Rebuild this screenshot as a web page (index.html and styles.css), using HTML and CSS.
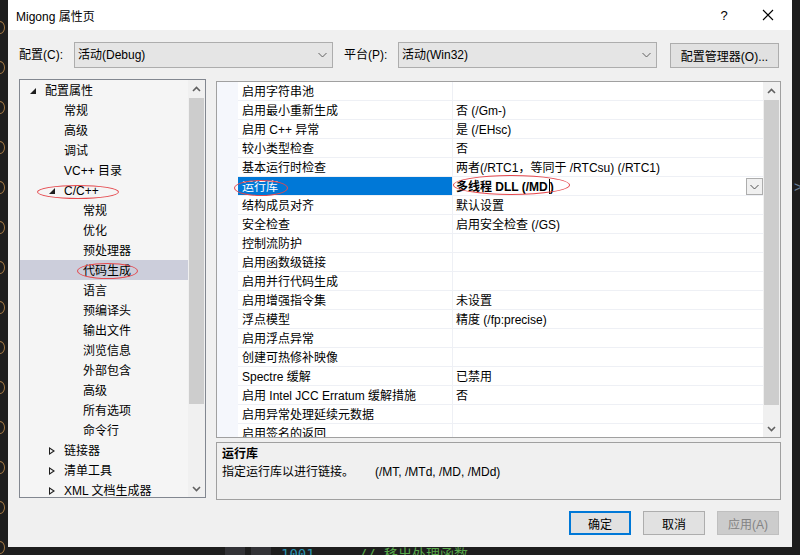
FILE: index.html
```html
<!DOCTYPE html>
<html lang="zh-CN">
<head>
  <meta charset="UTF-8">
  <title>Migong 属性页</title>
  <link rel="stylesheet" href="styles.css">
</head>
<body>
  <div class="desk">
    <div class="edge-left">
      <span class="fold"></span><span class="fold"></span><span class="fold"></span><span class="fold"></span>
      <span class="fold"></span><span class="fold"></span><span class="fold"></span><span class="fold"></span>
      <span class="fold"></span><span class="fold"></span><span class="fold"></span><span class="fold"></span>
      <span class="fold"></span><span class="fold"></span>
    </div>

    <div class="dialog">
      <div class="titlebar">
        <span class="title">Migong 属性页</span>
        <span class="cap-btn">?</span>
        <span class="cap-btn">
          <svg width="12" height="12" viewBox="0 0 12 12"><path d="M1 1 L11 11 M11 1 L1 11" stroke="#000" stroke-width="1.1" fill="none"/></svg>
        </span>
      </div>

      <div class="config-row">
        <span class="cfg-label">配置(C):</span>
        <div class="combo">
          <span>活动(Debug)</span>
          <svg width="9" height="6" viewBox="0 0 9 6"><path d="M0.5 1 L4.5 5 L8.5 1" stroke="#606060" stroke-width="1" fill="none"/></svg>
        </div>
        <span class="cfg-label plat">平台(P):</span>
        <div class="combo">
          <span>活动(Win32)</span>
          <svg width="9" height="6" viewBox="0 0 9 6"><path d="M0.5 1 L4.5 5 L8.5 1" stroke="#606060" stroke-width="1" fill="none"/></svg>
        </div>
        <button class="btn mgr">配置管理器(O)...</button>
      </div>

      <div class="main">
        <div class="tree">
          <div class="tree-list">
            <div class="node lv0"><span class="tw open"></span>配置属性</div>
            <div class="node lv1"><span class="tw"></span>常规</div>
            <div class="node lv1"><span class="tw"></span>高级</div>
            <div class="node lv1"><span class="tw"></span>调试</div>
            <div class="node lv1"><span class="tw"></span>VC++ 目录</div>
            <div class="node lv1"><span class="tw open"></span>C/C++<span class="mark mark-cpp"></span></div>
            <div class="node lv2"><span class="tw"></span>常规</div>
            <div class="node lv2"><span class="tw"></span>优化</div>
            <div class="node lv2"><span class="tw"></span>预处理器</div>
            <div class="node lv2 selected"><span class="tw"></span>代码生成<span class="mark mark-gen"></span></div>
            <div class="node lv2"><span class="tw"></span>语言</div>
            <div class="node lv2"><span class="tw"></span>预编译头</div>
            <div class="node lv2"><span class="tw"></span>输出文件</div>
            <div class="node lv2"><span class="tw"></span>浏览信息</div>
            <div class="node lv2"><span class="tw"></span>外部包含</div>
            <div class="node lv2"><span class="tw"></span>高级</div>
            <div class="node lv2"><span class="tw"></span>所有选项</div>
            <div class="node lv2"><span class="tw"></span>命令行</div>
            <div class="node lv1"><span class="tw closed"></span>链接器</div>
            <div class="node lv1"><span class="tw closed"></span>清单工具</div>
            <div class="node lv1"><span class="tw closed"></span>XML 文档生成器</div>
          </div>
          <div class="vscroll">
            <div class="sb-btn"><svg width="9" height="6" viewBox="0 0 9 6"><path d="M1 5 L4.5 1.5 L8 5" stroke="#606060" stroke-width="1.6" fill="none"/></svg></div>
            <div class="sb-thumb tree-thumb"></div>
            <div class="sb-track"></div>
            <div class="sb-btn"><svg width="9" height="6" viewBox="0 0 9 6"><path d="M1 1 L4.5 4.5 L8 1" stroke="#606060" stroke-width="1.6" fill="none"/></svg></div>
          </div>
        </div>

        <div class="right-col">
          <div class="grid">
            <div class="grid-rows">
              <div class="row"><span class="gutter"></span><span class="name">启用字符串池</span><span class="value"></span></div>
              <div class="row"><span class="gutter"></span><span class="name">启用最小重新生成</span><span class="value">否 (/Gm-)</span></div>
              <div class="row"><span class="gutter"></span><span class="name">启用 C++ 异常</span><span class="value">是 (/EHsc)</span></div>
              <div class="row"><span class="gutter"></span><span class="name">较小类型检查</span><span class="value">否</span></div>
              <div class="row"><span class="gutter"></span><span class="name">基本运行时检查</span><span class="value">两者(/RTC1，等同于 /RTCsu) (/RTC1)</span></div>
              <div class="row current">
                <span class="gutter"></span>
                <span class="name">运行库</span>
                <span class="value"><b>多线程 DLL (/MD</b><i class="caret"></i><b>)</b>
                  <span class="drop"><svg width="9" height="6" viewBox="0 0 9 6"><path d="M0.5 1 L4.5 5 L8.5 1" stroke="#505050" stroke-width="1" fill="none"/></svg></span>
                </span>
                <span class="mark mark-name"></span>
                <span class="mark mark-value"></span>
              </div>
              <div class="row"><span class="gutter"></span><span class="name">结构成员对齐</span><span class="value">默认设置</span></div>
              <div class="row"><span class="gutter"></span><span class="name">安全检查</span><span class="value">启用安全检查 (/GS)</span></div>
              <div class="row"><span class="gutter"></span><span class="name">控制流防护</span><span class="value"></span></div>
              <div class="row"><span class="gutter"></span><span class="name">启用函数级链接</span><span class="value"></span></div>
              <div class="row"><span class="gutter"></span><span class="name">启用并行代码生成</span><span class="value"></span></div>
              <div class="row"><span class="gutter"></span><span class="name">启用增强指令集</span><span class="value">未设置</span></div>
              <div class="row"><span class="gutter"></span><span class="name">浮点模型</span><span class="value">精度 (/fp:precise)</span></div>
              <div class="row"><span class="gutter"></span><span class="name">启用浮点异常</span><span class="value"></span></div>
              <div class="row"><span class="gutter"></span><span class="name">创建可热修补映像</span><span class="value"></span></div>
              <div class="row"><span class="gutter"></span><span class="name">Spectre 缓解</span><span class="value">已禁用</span></div>
              <div class="row"><span class="gutter"></span><span class="name">启用 Intel JCC Erratum 缓解措施</span><span class="value">否</span></div>
              <div class="row"><span class="gutter"></span><span class="name">启用异常处理延续元数据</span><span class="value"></span></div>
              <div class="row"><span class="gutter"></span><span class="name">启用签名的返回</span><span class="value"></span></div>
            </div>
            <div class="vscroll">
              <div class="sb-btn"><svg width="9" height="6" viewBox="0 0 9 6"><path d="M1 5 L4.5 1.5 L8 5" stroke="#606060" stroke-width="1.6" fill="none"/></svg></div>
              <div class="sb-thumb grid-thumb"></div>
              <div class="sb-track"></div>
              <div class="sb-btn"><svg width="9" height="6" viewBox="0 0 9 6"><path d="M1 1 L4.5 4.5 L8 1" stroke="#606060" stroke-width="1.6" fill="none"/></svg></div>
            </div>
          </div>

          <div class="desc">
            <div class="desc-title">运行库</div>
            <div>指定运行库以进行链接。<span class="desc-flags">(/MT, /MTd, /MD, /MDd)</span></div>
          </div>
        </div>
      </div>

      <div class="actions">
        <button class="btn default">确定</button>
        <button class="btn">取消</button>
        <button class="btn disabled">应用(A)</button>
      </div>
    </div>

    <div class="edge-right"><span class="chev">&gt;</span></div>

    <div class="edge-bottom">
      <span class="blk"></span><span class="blk"></span>
      <span class="ln">1001</span>
      <span class="cm">// 移出处理函数</span>
    </div>
  </div>
</body>
</html>
```

FILE: styles.css
```css
body {
  margin: 0;
  background-color: #1e1e1e;
  font-family: "Liberation Sans", "Noto Sans CJK SC", sans-serif;
  font-size: 12px;
  color: #000;
}
.desk {
  display: grid;
  grid-template-columns: 8px 784px 8px;
  grid-template-rows: 547px 8px;
  width: 800px;
  height: 555px;
  overflow: hidden;
}

/* editor behind the dialog */
.edge-left {
  grid-row: 1 / 3;
  overflow: hidden;
  display: flex;
  flex-direction: column;
  padding-top: 21px;
}
.fold {
  display: block;
  width: 8px;
  height: 11px;
  margin-left: -5px;
  margin-bottom: 27px;
  border: 1px solid #a57a45;
  border-radius: 50%;
  flex-shrink: 0;
}
.edge-right {
  grid-row: 1 / 3;
  grid-column: 3;
  overflow: hidden;
  padding-top: 178px;
}
.chev {
  display: block;
  margin-left: 2px;
  color: #6d7f95;
  font-size: 14px;
  line-height: 18px;
}
.edge-bottom {
  grid-column: 2;
  grid-row: 2;
  overflow: hidden;
  display: flex;
  align-items: flex-start;
  padding-left: 217px;
}
.blk {
  width: 20px;
  height: 8px;
  background-color: #333337;
  margin-right: 6px;
}
.ln {
  margin-left: 4px;
  margin-top: -1px;
  font-size: 14px;
  line-height: 16px;
  color: #2b91af;
  font-family: "DejaVu Sans Mono", monospace;
}
.cm {
  margin-left: 44px;
  margin-top: -1px;
  font-size: 14px;
  line-height: 16px;
  color: #57a64a;
  font-family: "DejaVu Sans Mono", "Noto Sans CJK SC", monospace;
}

/* dialog */
.dialog {
  background-color: #f0f0f0;
  display: flex;
  flex-direction: column;
}
.titlebar {
  height: 30px;
  background-color: #fff;
  display: flex;
  align-items: center;
  padding-left: 8px;
  padding-right: 2px;
}
.title {
  flex: 1;
  line-height: 18px;
  padding-top: 3px;
}
.cap-btn {
  width: 44px;
  height: 30px;
  display: flex;
  align-items: center;
  justify-content: center;
  font-size: 13px;
}

.config-row {
  display: flex;
  align-items: center;
  margin-top: 12px;
  padding-left: 11px;
  height: 26px;
}
.cfg-label {
  width: 55px;
  line-height: 18px;
}
.cfg-label.plat {
  width: 54px;
  margin-left: 11px;
}
.combo {
  width: 259px;
  height: 26px;
  box-sizing: border-box;
  border: 1px solid #adadad;
  background-color: #e5e5e5;
  display: flex;
  align-items: center;
  justify-content: space-between;
  padding: 0 5px 0 3px;
  line-height: 18px;
}
.btn {
  font-family: inherit;
  font-size: 12px;
  color: #000;
  height: 24px;
  width: 62px;
  padding: 0;
  border: 1px solid #adadad;
  background-color: #e1e1e1;
}
.btn.mgr {
  width: 109px;
  height: 25px;
  margin-left: 13px;
}
.btn.default {
  border: 2px solid #0078d7;
}
.btn.disabled {
  background-color: #cccccc;
  border-color: #bfbfbf;
  color: #838383;
}

.main {
  display: flex;
  align-items: flex-start;
  margin-top: 11px;
  padding-left: 11px;
  gap: 10px;
}

/* tree */
.tree {
  width: 187px;
  height: 419px;
  box-sizing: border-box;
  border: 1px solid #828790;
  background-color: #f5f5f5;
  display: flex;
}
.tree-list {
  flex: 1;
  overflow: hidden;
}
.node {
  position: relative;
  height: 20px;
  line-height: 22px;
  display: flex;
  white-space: nowrap;
}
.node.lv0 { padding-left: 6px; }
.node.lv1 { padding-left: 25px; }
.node.lv2 { padding-left: 44px; }
.node.selected {
  background-color: #cccedb;
}
.tw {
  width: 19px;
  height: 20px;
  flex-shrink: 0;
  position: relative;
}
.tw.open::after {
  content: "";
  position: absolute;
  left: 4px;
  top: 8px;
  border-style: solid;
  border-width: 0 0 6px 6px;
  border-color: transparent transparent #1e1e1e transparent;
}
.tw.closed::after {
  content: "";
  position: absolute;
  left: 4px;
  top: 7px;
  width: 0;
  height: 0;
  border-style: solid;
  border-width: 4.5px 0 4.5px 6px;
  border-color: transparent transparent transparent #1e1e1e;
}
.tw.closed::before {
  content: "";
  position: absolute;
  left: 5px;
  top: 9px;
  z-index: 1;
  border-style: solid;
  border-width: 2.5px 0 2.5px 3.4px;
  border-color: transparent transparent transparent #f5f5f5;
}

.mark {
  position: absolute;
  border: 1px solid #e5484d;
  border-radius: 50%;
  pointer-events: none;
}
.mark-cpp { left: 17px; top: 5px; width: 80px; height: 12px; }
.mark-gen { left: 57px; top: 3px; width: 59px; height: 14px; }

.vscroll {
  width: 17px;
  flex-shrink: 0;
  background-color: #f0f0f0;
  display: flex;
  flex-direction: column;
}
.sb-btn {
  height: 17px;
  display: flex;
  align-items: center;
  justify-content: center;
  flex-shrink: 0;
}
.sb-thumb {
  margin: 1px 1px 0;
  background-color: #cdcdcd;
  flex-shrink: 0;
}
.tree-thumb { height: 306px; }
.grid-thumb { height: 305px; }
.sb-track { flex: 1; }

/* property grid */
.right-col {
  display: flex;
  flex-direction: column;
  gap: 4px;
  margin-top: 2px;
}
.grid {
  width: 565px;
  height: 357px;
  box-sizing: border-box;
  border: 1px solid #a0a0a0;
  background-color: #fff;
  display: flex;
}
.grid-rows {
  flex: 1;
  overflow: hidden;
}
.row {
  position: relative;
  display: grid;
  grid-template-columns: 21px 215px 1fr;
  height: 19px;
  line-height: 20px;
  white-space: nowrap;
}
.gutter {
  background-color: #f5f7fc;
}
.name {
  padding-left: 4px;
  border-right: 1px solid #eef0f5;
  border-bottom: 1px solid #eef0f5;
  overflow: hidden;
}
.value {
  padding-left: 3px;
  border-bottom: 1px solid #eef0f5;
  display: flex;
  align-items: flex-start;
  overflow: hidden;
}
.row.current .name {
  background-color: #0078d7;
  color: #fff;
}
.caret {
  display: inline-block;
  width: 1px;
  height: 15px;
  margin-top: 2px;
  margin-left: 1px;
  background-color: #000;
}
.drop {
  margin-left: auto;
  margin-top: 1px;
  width: 17px;
  height: 17px;
  box-sizing: border-box;
  border: 1px solid #adadad;
  background-color: #f0f0f0;
  display: flex;
  align-items: center;
  justify-content: center;
}
.mark-name { left: 17px; top: 3px; width: 52px; height: 14px; }
.mark-value { left: 236px; top: -2px; width: 115px; height: 18px; }

.desc {
  width: 565px;
  height: 58px;
  box-sizing: border-box;
  border: 1px solid #a0a0a0;
  padding: 2px 5px;
  line-height: 18px;
}
.desc-title {
  font-weight: bold;
}
.desc-flags {
  margin-left: 21px;
}

.actions {
  display: flex;
  justify-content: flex-end;
  gap: 12px;
  margin-top: 11px;
  padding-right: 13px;
}
```
